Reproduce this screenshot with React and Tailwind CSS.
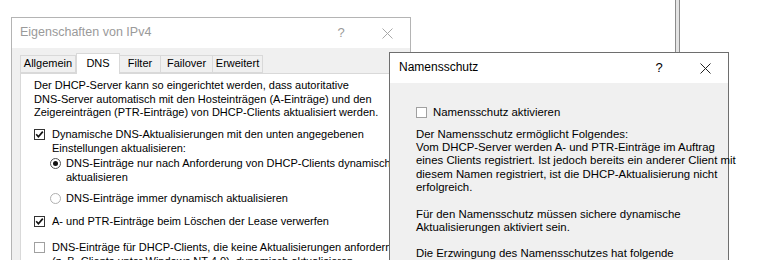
import React from "react";

function Box({ checked }) {
  return (
    <span
      className={`mt-[1px] flex h-[11px] w-[11px] shrink-0 items-center justify-center border bg-white ${
        checked ? "border-[#333333]" : "border-[#a0a0a0]"
      }`}
    >
      {checked && (
        <svg width="9" height="9" viewBox="0 0 9 9">
          <path d="M1.2 4.3 L3.4 6.7 L7.8 1.6" stroke="#111" strokeWidth="1.7" fill="none" />
        </svg>
      )}
    </span>
  );
}

function Radio({ checked }) {
  return (
    <span
      className={`mt-[1px] flex h-[11px] w-[11px] shrink-0 items-center justify-center rounded-full border bg-white ${
        checked ? "border-[#555555]" : "border-[#b0b0b0]"
      }`}
    >
      {checked && <span className="h-[5px] w-[5px] rounded-full bg-[#111]" />}
    </span>
  );
}

function CloseX({ color }) {
  return (
    <svg width="11" height="11" viewBox="0 0 11 11">
      <path d="M0.5 0.5 L10.5 10.5 M10.5 0.5 L0.5 10.5" stroke={color} strokeWidth="1" fill="none" />
    </svg>
  );
}

const TABS = [
  { label: "Allgemein", w: "w-[56px]" },
  { label: "DNS", w: "w-[44px]", active: true },
  { label: "Filter", w: "w-[41px]" },
  { label: "Failover", w: "w-[52px]" },
  { label: "Erweitert", w: "w-[50px]" },
];

export default function App() {
  return (
    <div className="relative h-[260px] w-[763px] overflow-hidden bg-white font-['Liberation_Sans',Arial,sans-serif] text-[11px] leading-[13.5px] text-black">
      {/* window edge behind */}
      <div className="absolute left-[675px] top-0 h-[52px] w-[5px] border-x border-[#8c8c8c] bg-[#e4e4e4]" />

      {/* Eigenschaften von IPv4 (inactive) */}
      <div className="absolute left-[11px] top-[17px] h-[260px] w-[400px] border border-[#b4b4b4] bg-[#f0f0f0]">
        <div className="flex h-[30px] items-center bg-white pl-[8px] text-[12.5px] text-[#9a9a9a]">
          <span className="flex-1">Eigenschaften von IPv4</span>
          <span className="w-[46px] text-center text-[13px]">?</span>
          <span className="flex w-[46px] justify-center">
            <CloseX color="#a8a8a8" />
          </span>
        </div>

        <div className="flex items-end pl-[8px] pt-[5px]">
          {TABS.map((t) =>
            t.active ? (
              <div
                key={t.label}
                className={`${t.w} relative z-10 -mb-px flex h-[21px] items-start justify-center border border-b-0 border-[#d9d9d9] bg-white pt-[3px]`}
              >
                {t.label}
              </div>
            ) : (
              <div
                key={t.label}
                className={`${t.w} flex h-[18px] items-center justify-center border border-l-0 border-[#d9d9d9] first:border-l bg-[#f0f0f0]`}
              >
                {t.label}
              </div>
            )
          )}
        </div>

        <div className="ml-[8px] h-[200px] w-[400px] border border-[#d9d9d9] bg-white pl-[13px] pt-[5px] whitespace-nowrap">
          <p>
            Der DHCP-Server kann so eingerichtet werden, dass autoritative
            <br />
            DNS-Server automatisch mit den Hosteinträgen (A-Einträge) und den
            <br />
            Zeigereinträgen (PTR-Einträge) von DHCP-Clients aktualisiert werden.
          </p>

          <div className="mt-[8.5px] flex items-start gap-[7px]">
            <Box checked />
            <span>
              Dynamische DNS-Aktualisierungen mit den unten angegebenen
              <br />
              Einstellungen aktualisieren:
            </span>
          </div>

          <div className="ml-[16px] mt-[2px] flex items-start gap-[5px]">
            <Radio checked />
            <span>
              DNS-Einträge nur nach Anforderung von DHCP-Clients dynamisch
              <br />
              aktualisieren
            </span>
          </div>

          <div className="ml-[16px] mt-[8px] flex items-start gap-[5px]">
            <Radio />
            <span>DNS-Einträge immer dynamisch aktualisieren</span>
          </div>

          <div className="mt-[9.5px] flex items-start gap-[7px]">
            <Box checked />
            <span>A- und PTR-Einträge beim Löschen der Lease verwerfen</span>
          </div>

          <div className="mt-[12.5px] flex items-start gap-[7px]">
            <Box />
            <span>
              DNS-Einträge für DHCP-Clients, die keine Aktualisierungen anfordern
              <br />
              (z. B. Clients unter Windows NT 4.0), dynamisch aktualisieren
            </span>
          </div>
        </div>
      </div>

      {/* Namensschutz (active) */}
      <div className="absolute left-[389px] top-[52px] h-[240px] w-[340px] border border-[#6e6e6e] bg-[#f0f0f0]">
        <div className="flex h-[30px] items-center bg-white pl-[9px] text-[12px]">
          <span className="flex-1">Namensschutz</span>
          <span className="w-[46px] text-center text-[13px]">?</span>
          <span className="flex w-[46px] justify-center">
            <CloseX color="#222" />
          </span>
        </div>

        <div className="whitespace-nowrap pl-[26px] pt-[23px] text-[11.4px] leading-[13.3px]">
          <div className="flex items-start gap-[6px]">
            <Box />
            <span>Namensschutz aktivieren</span>
          </div>

          <p className="mt-[8.5px]">
            Der Namensschutz ermöglicht Folgendes:
            <br />
            Vom DHCP-Server werden A- und PTR-Einträge im Auftrag
            <br />
            eines Clients registriert. Ist jedoch bereits ein anderer Client mit
            <br />
            diesem Namen registriert, ist die DHCP-Aktualisierung nicht
            <br />
            erfolgreich.
          </p>

          <p className="mt-[13.5px]">
            Für den Namensschutz müssen sichere dynamische
            <br />
            Aktualisierungen aktiviert sein.
          </p>

          <p className="mt-[13px]">Die Erzwingung des Namensschutzes hat folgende</p>
        </div>
      </div>
    </div>
  );
}
